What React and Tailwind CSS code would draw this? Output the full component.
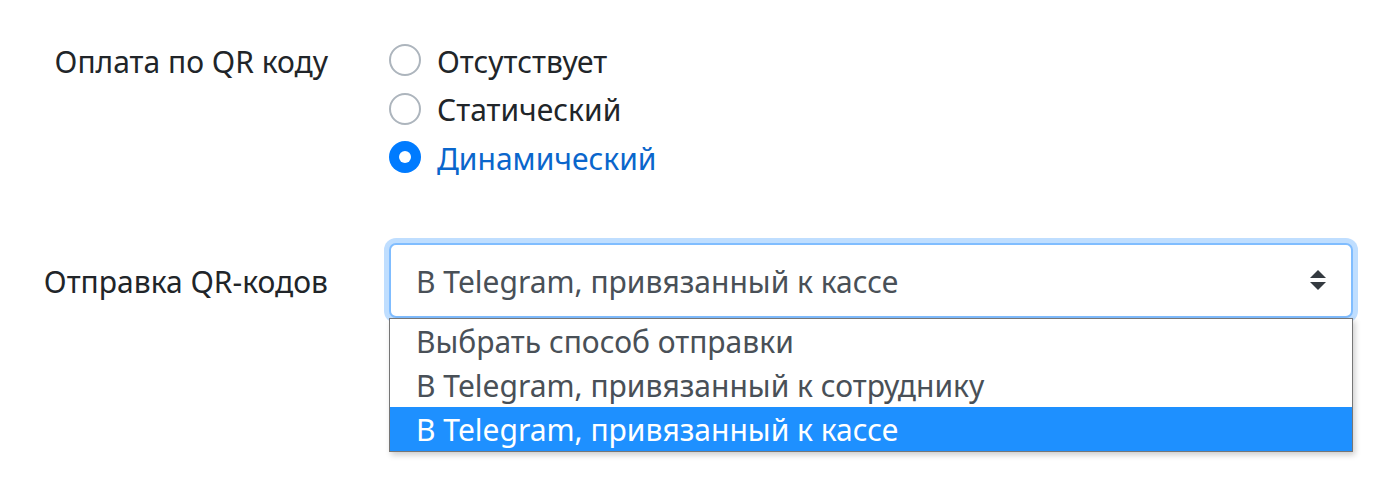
import React from "react";

const font = { fontFamily: '"Noto Sans", "Open Sans", sans-serif' };

function Radio({ label, checked }) {
  return (
    <label className="flex items-center h-[48.5px] cursor-pointer">
      {checked ? (
        <span className="w-[32px] h-[32px] rounded-full bg-[#007bff] flex items-center justify-center">
          <span className="w-[12px] h-[12px] rounded-full bg-white" />
        </span>
      ) : (
        <span className="w-[32px] h-[32px] rounded-full border-2 border-[#adb5bd] bg-white" />
      )}
      <span className={`ml-[16px] pt-[3px] ${checked ? "text-[#0a66cc]" : "text-[#212529]"}`}>{label}</span>
    </label>
  );
}

export default function App() {
  const options = [
    "Выбрать способ отправки",
    "В Telegram, привязанный к сотруднику",
    "В Telegram, привязанный к кассе",
  ];

  return (
    <div className="w-[1396px] h-[488px] bg-white text-[30px] leading-none" style={font}>
      {/* QR payment */}
      <div className="flex pt-[36px]">
        <div className="w-[328px] text-right text-[#212529] h-[48.5px] pt-[3px] flex items-center justify-end">
          Оплата по QR коду
        </div>
        <div className="ml-[61px] flex flex-col">
          <Radio label="Отсутствует" />
          <Radio label="Статический" />
          <Radio label="Динамический" checked />
        </div>
      </div>

      {/* QR sending */}
      <div className="flex mt-[61px]">
        <div className="w-[328px] text-right text-[#212529] h-[75px] pt-[3px] flex items-center justify-end">
          Отправка QR-кодов
        </div>
        <div className="ml-[61px] relative w-[964px]">
          <div className="h-[75px] rounded-[7px] border-2 border-[#80bdff] shadow-[0_0_0_5px_rgba(0,123,255,0.25)] bg-white flex items-center pl-[25px] pr-[24px] text-[#495057]">
            <span className="flex-1 pt-[3px]">В Telegram, привязанный к кассе</span>
            <svg width="18" height="22" viewBox="0 0 18 22" className="text-[#343a40]">
              <path d="M9 1 L17 9 L1 9 Z" fill="currentColor" />
              <path d="M1 13 L17 13 L9 21 Z" fill="currentColor" />
            </svg>
          </div>
          <div className="absolute left-0 top-[75px] w-[964px] border border-[#767676] bg-white shadow-[2px_3px_6px_rgba(0,0,0,0.2)]">
            {options.map((o, i) => (
              <div
                key={o}
                className={`h-[44px] flex items-center pl-[26px] pt-[3px] ${
                  i === 2 ? "bg-[#1e90ff] text-white" : "text-[#495057]"
                }`}
              >
                {o}
              </div>
            ))}
          </div>
        </div>
      </div>
    </div>
  );
}
